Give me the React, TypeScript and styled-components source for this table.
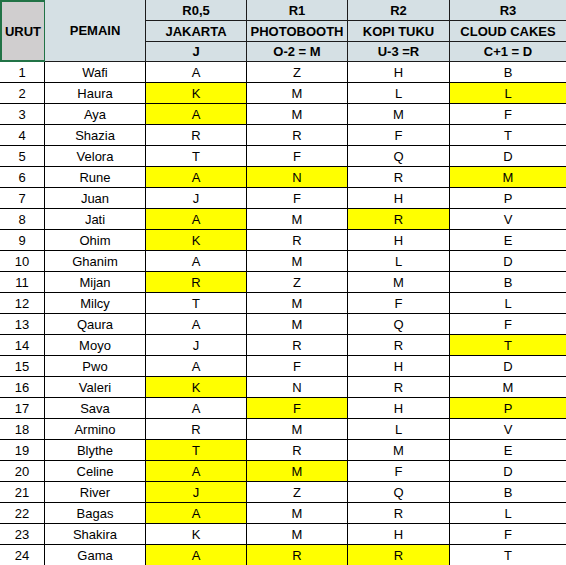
import styled, { createGlobalStyle } from 'styled-components';

const GlobalStyle = createGlobalStyle`
  html, body {
    margin: 0;
    padding: 0;
    background: #ffffff;
    overflow: hidden;
  }
  body {
    font-family: 'Liberation Sans', Arial, sans-serif;
  }
`;

interface Player {
  no: number;
  name: string;
  letters: string[];
  marks: boolean[];
}

// nomor, nama, huruf per ronde, tanda kuning per ronde
const raw: [number, string, string, string][] = [
  [1, 'Wafi', 'AZHB', '0000'],
  [2, 'Haura', 'KMLL', '1001'],
  [3, 'Aya', 'AMMF', '1000'],
  [4, 'Shazia', 'RRFT', '0000'],
  [5, 'Velora', 'TFQD', '0000'],
  [6, 'Rune', 'ANRM', '1101'],
  [7, 'Juan', 'JFHP', '0000'],
  [8, 'Jati', 'AMRV', '1010'],
  [9, 'Ohim', 'KRHE', '1000'],
  [10, 'Ghanim', 'AMLD', '0000'],
  [11, 'Mijan', 'RZMB', '1000'],
  [12, 'Milcy', 'TMFL', '0000'],
  [13, 'Qaura', 'AMQF', '0000'],
  [14, 'Moyo', 'JRRT', '0001'],
  [15, 'Pwo', 'AFHD', '0000'],
  [16, 'Valeri', 'KNRM', '1000'],
  [17, 'Sava', 'AFHP', '0101'],
  [18, 'Armino', 'RMLV', '0000'],
  [19, 'Blythe', 'TRME', '1000'],
  [20, 'Celine', 'AMFD', '1100'],
  [21, 'River', 'JZQB', '1000'],
  [22, 'Bagas', 'AMRL', '1000'],
  [23, 'Shakira', 'KMHF', '0000'],
  [24, 'Gama', 'ARRT', '1110'],
];

const players: Player[] = raw.map(([no, name, l, m]) => ({
  no,
  name,
  letters: l.split(''),
  marks: m.split('').map((c) => c === '1'),
}));

const rounds = [
  { round: 'R0,5', place: 'JAKARTA', code: 'J' },
  { round: 'R1', place: 'PHOTOBOOTH', code: 'O-2 = M' },
  { round: 'R2', place: 'KOPI TUKU', code: 'U-3 =R' },
  { round: 'R3', place: 'CLOUD CAKES', code: 'C+1 = D' },
];

const Sheet = styled.div`
  display: grid;
  grid-template-columns: 45px 101px 101px 101px 102px 1fr;
  grid-template-rows: 21px 21px 20px;
  grid-auto-rows: 21px;
  width: 566px;
  font-size: 13px;
  color: #000000;
`;

const HeadCell = styled.div<{ $edge?: boolean }>`
  display: flex;
  align-items: center;
  justify-content: center;
  box-sizing: border-box;
  background: #d5e0e4;
  border-right: ${(p) => (p.$edge ? 'none' : '1px solid #1c1c1c')};
  border-bottom: 1px solid #1c1c1c;
  font-weight: 700;
  white-space: nowrap;
  overflow: hidden;
`;

const TallHead = styled(HeadCell)`
  grid-row: 1 / span 3;
`;

const UrutHead = styled(TallHead)`
  background: #d0cecf;
  border: 2px solid #217346;
  border-right-width: 1px;
`;

const Cell = styled.div<{ $mark?: boolean; $edge?: boolean }>`
  display: flex;
  align-items: center;
  justify-content: center;
  box-sizing: border-box;
  background: ${(p) => (p.$mark ? '#ffff00' : '#ffffff')};
  border-right: ${(p) => (p.$edge ? 'none' : '1px solid #000000')};
  border-bottom: 1px solid #000000;
  white-space: nowrap;
`;

const lastRound = rounds.length - 1;

export default function App() {
  return (
    <>
      <GlobalStyle />
      <Sheet>
        <UrutHead>URUT</UrutHead>
        <TallHead>PEMAIN</TallHead>
        {rounds.map((r, i) => (
          <HeadCell key={r.round} $edge={i === lastRound}>
            {r.round}
          </HeadCell>
        ))}
        {rounds.map((r, i) => (
          <HeadCell key={r.place} $edge={i === lastRound}>
            {r.place}
          </HeadCell>
        ))}
        {rounds.map((r, i) => (
          <HeadCell key={r.code} $edge={i === lastRound}>
            {r.code}
          </HeadCell>
        ))}
        {players.map((p) => [
          <Cell key={`n${p.no}`}>{p.no}</Cell>,
          <Cell key={`p${p.no}`}>{p.name}</Cell>,
          ...p.letters.map((l, i) => (
            <Cell key={`${p.no}-${i}`} $mark={p.marks[i]} $edge={i === lastRound}>
              {l}
            </Cell>
          )),
        ])}
      </Sheet>
    </>
  );
}
